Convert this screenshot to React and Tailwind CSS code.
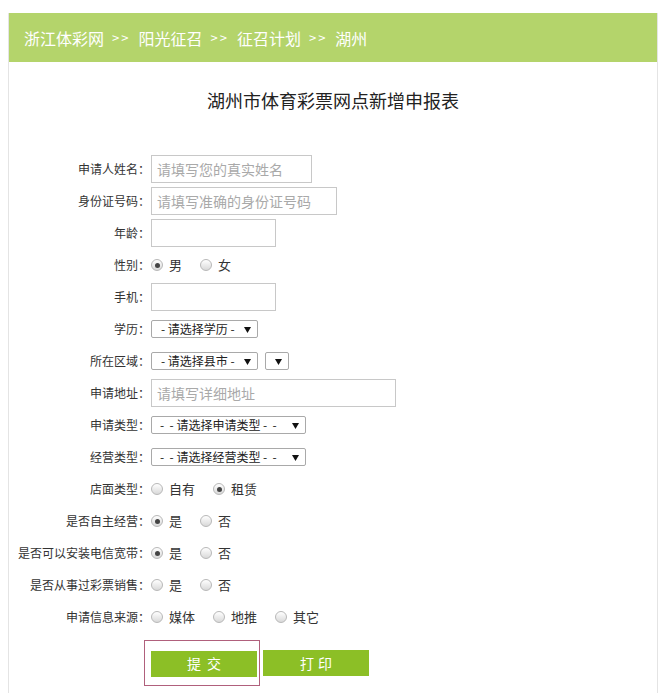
import React from 'react'

const font = { fontFamily: '"Noto Sans CJK SC", "Liberation Sans", sans-serif' }

const Radio = ({ checked, label }) => (
    <span className="flex items-center mr-[18px]">
        <span className="relative w-[12px] h-[12px] rounded-full border border-[#b8b8b8] bg-gradient-to-b from-[#ffffff] to-[#d9d9d9] flex items-center justify-center">
            {checked && <span className="w-[5px] h-[5px] rounded-full bg-[#444]" />}
        </span>
        <span className="ml-[6px] text-[13px] text-[#333]">{label}</span>
    </span>
)

const Arrow = () => (
    <svg width="7" height="7" viewBox="0 0 7 7">
        <path d="M0 1h7L3.5 7z" fill="#111" />
    </svg>
)

const Select = ({ text, w, pad = 'pl-[9px]' }) => (
    <div
        className={`h-[18px] border border-[#a9a9a9] rounded-[2px] bg-white flex items-center justify-between pr-[6px] text-[12px] text-[#222] whitespace-pre ${pad}`}
        style={{ width: w }}>
        <span className="leading-none">{text}</span>
        <Arrow />
    </div>
)

const Input = ({ w, placeholder }) => (
    <input
        className="h-[28px] border border-[#c8c8c8] px-[5px] text-[14px] placeholder:text-[#a9a9a9] outline-none"
        style={{ width: w }}
        placeholder={placeholder}
    />
)

const rows = [
    ['申请人姓名：', <Input w={161} placeholder="请填写您的真实姓名" />],
    ['身份证号码：', <Input w={186} placeholder="请填写准确的身份证号码" />],
    ['年龄：', <Input w={125} />],
    ['性别：', <><Radio checked label="男" /><Radio label="女" /></>],
    ['手机：', <Input w={125} />],
    ['学历：', <Select w={107} text="- 请选择学历 -" />],
    ['所在区域：', <div className="flex gap-[7px]"><Select w={107} text="- 请选择县市 -" /><Select w={24} text="" pad="pl-0" /></div>],
    ['申请地址：', <Input w={245} placeholder="请填写详细地址" />],
    ['申请类型：', <Select w={155} text="-  - 请选择申请类型 -  -" pad="pl-[8px]" />],
    ['经营类型：', <Select w={155} text="-  - 请选择经营类型 -  -" pad="pl-[8px]" />],
    ['店面类型：', <><Radio label="自有" /><Radio checked label="租赁" /></>],
    ['是否自主经营：', <><Radio checked label="是" /><Radio label="否" /></>],
    ['是否可以安装电信宽带：', <><Radio checked label="是" /><Radio label="否" /></>],
    ['是否从事过彩票销售：', <><Radio label="是" /><Radio label="否" /></>],
    ['申请信息来源：', <><Radio label="媒体" /><Radio label="地推" /><Radio label="其它" /></>],
]

export default function App() {
    return (
        <div className="w-[670px] h-[693px] bg-white overflow-hidden pt-[13px] px-[8px]" style={font}>
            <div className="h-full w-[650px] border-x border-[#e4e4e4]">
                <div className="h-[49px] bg-[#b4d46b] flex items-center pl-[15px] text-white text-[16px]">
                    浙江体彩网<span className="mx-[8px] text-[13px] tracking-[2px]">&gt;&gt;</span>阳光征召
                    <span className="mx-[8px] text-[13px] tracking-[2px]">&gt;&gt;</span>征召计划
                    <span className="mx-[8px] text-[13px] tracking-[2px]">&gt;&gt;</span>湖州
                </div>
                <h1 className="mt-[26px] text-center text-[18px] leading-[24px] text-[#222]">
                    湖州市体育彩票网点新增申报表
                </h1>
                <div className="mt-[41px] grid grid-cols-[141px_1fr] gap-x-[1px]">
                    {rows.map(([label, control], i) => (
                        <React.Fragment key={i}>
                            <div className="h-[32px] flex items-center justify-end text-[12px] text-[#333]">
                                {label}
                            </div>
                            <div className="h-[32px] flex items-center">{control}</div>
                        </React.Fragment>
                    ))}
                </div>
                <div className="mt-[17px] pl-[142px] flex gap-[6px]">
                    <div className="relative">
                        <button className="w-[106px] h-[26px] bg-[#8cbf26] text-white text-[14px] tracking-[6px] pl-[6px]">
                            提交
                        </button>
                        <span className="absolute -left-[7px] -top-[10px] -right-[3px] -bottom-[9px] border border-[#b0607c]" />
                    </div>
                    <button className="w-[106px] h-[26px] bg-[#8cbf26] text-white text-[14px] tracking-[4px] pl-[4px]">
                        打印
                    </button>
                </div>
            </div>
        </div>
    )
}
